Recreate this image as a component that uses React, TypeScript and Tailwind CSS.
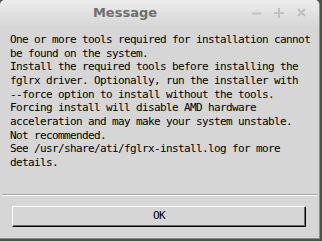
const lines = [
  'One or more tools required for installation cannot',
  'be found on the system.',
  'Install the required tools before installing the',
  'fglrx driver. Optionally, run the installer with',
  '--force option to install without the tools.',
  'Forcing install will disable AMD hardware',
  'acceleration and may make your system unstable.',
  'Not recommended.',
  'See /usr/share/ati/fglrx-install.log for more',
  'details.',
];

const App = () => {
  return (
    <div className="w-[322px] h-[241px] bg-[#4b5344] overflow-hidden">
      {/* window */}
      <div className="w-[320px] h-[239px] flex flex-col bg-[#d6d6d6] rounded-t-[5px] border-r border-b border-[#8c8c8c] overflow-hidden">
        {/* title bar */}
        <div className="h-[25px] shrink-0 flex items-center bg-gradient-to-b from-[#ececec] to-[#d8d8d8]">
          <div className="w-[250px] flex justify-center">
            <span
              className="text-[13px] font-bold text-[#6f6f6f] leading-none"
              style={{ fontFamily: '"DejaVu Sans", sans-serif' }}
            >
              Message
            </span>
          </div>
          <div className="flex items-center gap-[13px] ml-[2px]">
            <svg width="9" height="10" viewBox="0 0 9 10">
              <path d="M0 5.5H9" stroke="#c0c0c0" strokeWidth="2" />
            </svg>
            <svg width="10" height="10" viewBox="0 0 10 10">
              <path d="M0 5H10M5 0V10" stroke="#c0c0c0" strokeWidth="2" />
            </svg>
            <svg width="9" height="9" viewBox="0 0 9 9">
              <path d="M1 1L8 8M8 1L1 8" stroke="#c0c0c0" strokeWidth="2" />
            </svg>
          </div>
        </div>

        {/* message body */}
        <div
          className="h-[169px] shrink-0 pl-[10px] pt-[8px] text-[11px] leading-[13.67px] tracking-[-0.62px] text-black whitespace-pre"
          style={{ fontFamily: '"DejaVu Sans Mono", monospace' }}
        >
          {lines.map((l) => (
            <div key={l}>{l}</div>
          ))}
        </div>

        {/* separator */}
        <div className="mx-[2px] h-[2px] shrink-0 border-t border-[#a3a3a3] border-b border-b-white" />

        {/* button row */}
        <div className="pl-[12px] pr-[13px] pt-[10px]">
          <button
            className="w-full h-[21px] flex items-center justify-center bg-[#d6d6d6] border border-t-white border-l-white border-r-black border-b-black shadow-[inset_-1px_-1px_0_#6e6e6e] text-[11px] tracking-[-0.62px] text-black"
            style={{ fontFamily: '"DejaVu Sans Mono", monospace' }}
          >
            OK
          </button>
        </div>
      </div>
    </div>
  );
};

export default App;
